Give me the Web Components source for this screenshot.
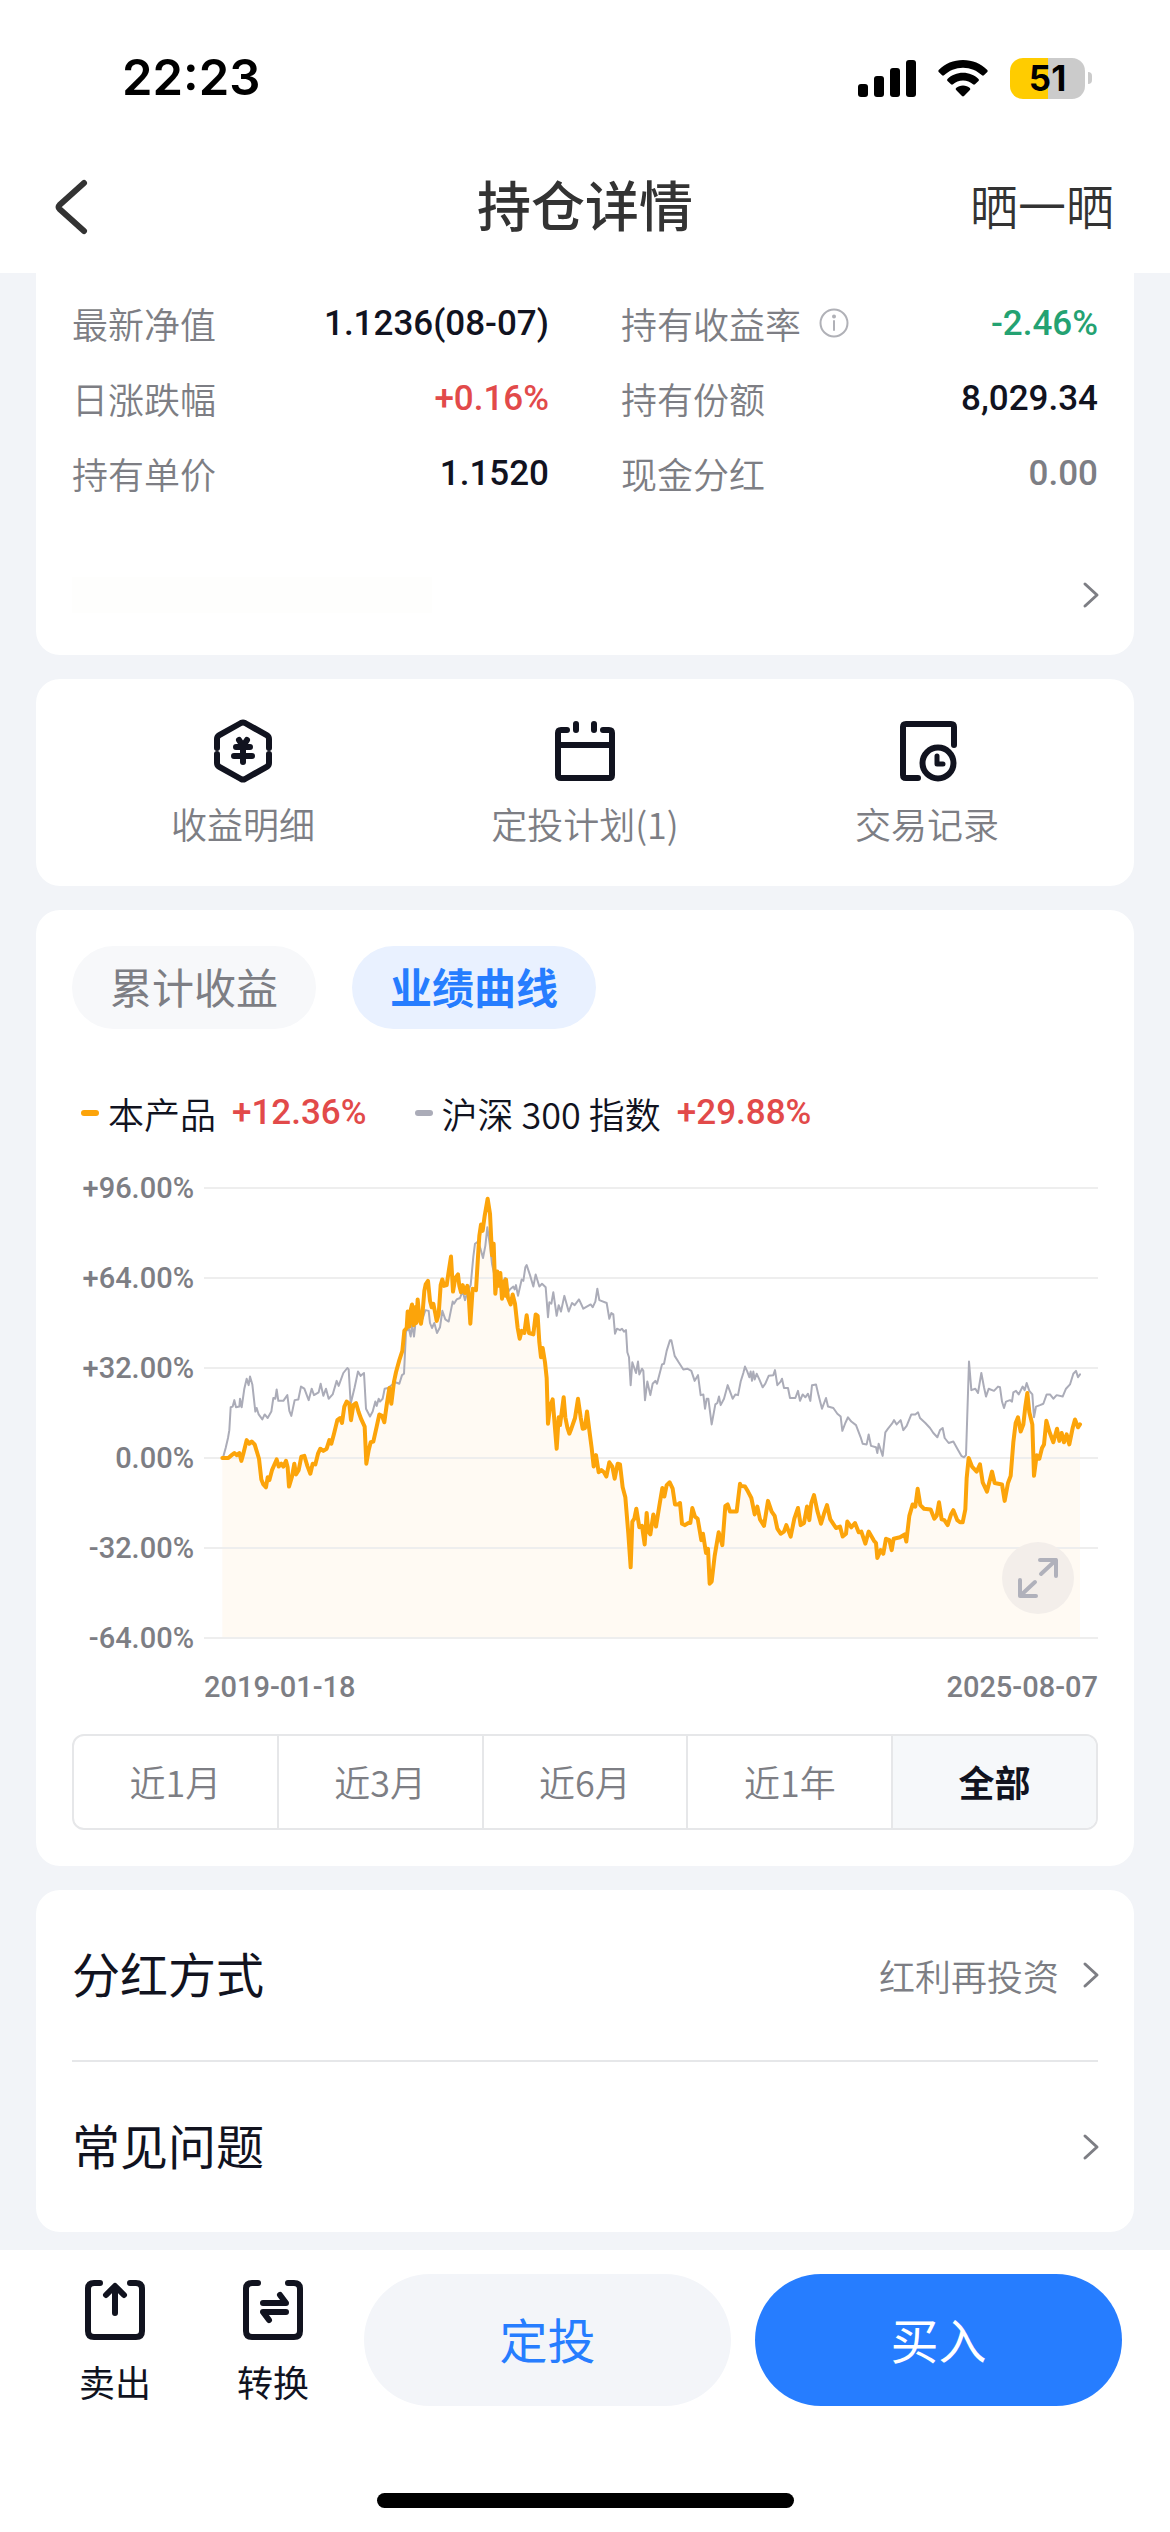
<!DOCTYPE html>
<html lang="zh-CN">
<head>
<meta charset="utf-8">
<meta name="viewport" content="width=device-width, initial-scale=1">
<title>持仓详情</title>
<style>
  :root {
    --ink: #11131f;
    --nav: #333333;
    --muted: #7d7e84;
    --line: #e6e7e9;
    --page: #f2f4f8;
    --blue: #267dff;
    --red: #e24a4a;
    --green: #24a272;
    --num: Roboto, "Liberation Sans", sans-serif;
  }
  body {
    margin: 0;
    background: var(--page);
    color: var(--ink);
    font-family: "Noto Sans CJK SC", "Noto Sans", sans-serif;
    font-size: 36px;
    line-height: 48px;
  }
</style>
</head>
<body>
<holding-page></holding-page>

<script>
const BASE = `
  *, *::before { box-sizing: border-box; }
  button { font: inherit; color: inherit; border: 0; margin: 0; padding: 0; background: none; cursor: pointer; }
  a { color: inherit; text-decoration: none; }
  svg { display: block; fill: none; overflow: visible; stroke-linecap: round; stroke-linejoin: round; flex: none; }
`;

function define(name, render) {
  customElements.define(name, class extends HTMLElement {
    connectedCallback() {
      if (this.shadowRoot) return;
      const { css, html } = render(this);
      this.attachShadow({ mode: 'open' }).innerHTML = `<style>${BASE}${css}</style>${html}`;
    }
  });
}

const ICONS = {
  yen: [60, 64, 6, '<path d="M4 29V20Q4 17.500 6.300 16.200L28 4Q30 3 32 4L53.700 16.200Q56 17.500 56 20V29M4 35V44Q4 46.500 6.300 47.800L28 60Q30 61 32 60L53.700 47.800Q56 46.500 56 44V35"/><path d="M26 21L30 27L34 21M23 28H37M21 37H39M30 28V43"/>'],
  calendar: [60, 60, 6, '<path d="M12 9H6Q3 9 3 12V54Q3 57 6 57H54Q57 57 57 54V12Q57 9 54 9H48M3 24H57M21 3V9M39 3V9"/>'],
  record: [60, 60, 6, '<path d="M21 57H9Q6 57 6 54V6Q6 3 9 3H54Q57 3 57 6V24"/><circle cx="41" cy="42" r="15.500"/><path stroke-width="5" d="M40 35V43H46"/>'],
  sell: [60, 60, 6, '<path d="M15 3H9Q3 3 3 9V51Q3 57 9 57H51Q57 57 57 51V9Q57 3 51 3H45M30 7V33M21 15L30 6L39 15"/>'],
  convert: [60, 60, 6, '<path d="M15 3H9Q3 3 3 9V51Q3 57 9 57H51Q57 57 57 51V9Q57 3 51 3H45"/><path d="M20 23H43L37 15M43 32H20L26 40"/>'],
  back: [32, 54, 6, '<path d="M28 3L3.500 25Q1.500 27 3.500 29L28 51"/>'],
  next: [16, 26, 3, '<path d="M3 2L15 13L3 24"/>'],
  info: [30, 30, 2, '<circle cx="15" cy="15" r="13.500"/><path d="M15 13V22"/><circle cx="15" cy="8.500" r="1"/>'],
  expand: [44, 44, 4, '<path d="M24 4H40V20M40 4L25 18M4 24V40H20M4 40L19 26"/>'],
};

define('app-icon', el => {
  const [w, h, stroke, body] = ICONS[el.getAttribute('name')];
  return {
    css: `:host { display: inline-flex; flex: none; }`,
    html: `<svg width="${w}" height="${h}" viewBox="0 0 ${w} ${h}" stroke="currentColor" stroke-width="${stroke}" aria-hidden="true">${body}</svg>`,
  };
});

define('status-bar', () => ({
  css: `
    :host { display: flex; align-items: center; justify-content: space-between; padding: 48px 78px 33px 122px; background: #fff; color: #000; }
    .time { font: 600 49px/60px Inter, sans-serif; }
    .signs { display: flex; align-items: center; gap: 22px; }
    .battery { display: flex; align-items: center; gap: 3px; }
    .cell { width: 75px; height: 41px; border-radius: 13px; text-align: center; font: 700 35px/41px Inter, sans-serif;
            background: linear-gradient(to right, #ffcc00 51%, #cbcbcb 51%); }
    .nub { width: 4px; height: 12px; border-radius: 0 4px 4px 0; background: #cbcbcb; }
    svg { fill: #000; }
  `,
  html: `
    <span class="time">22:23</span>
    <span class="signs">
      <svg width="58" height="38" viewBox="0 0 58 38"><rect y="25" width="10" height="13" rx="3"/><rect x="16" y="17" width="10" height="21" rx="3"/><rect x="32" y="9" width="10" height="29" rx="3"/><rect x="48" y="1" width="10" height="37" rx="3"/></svg>
      <svg width="50" height="37" viewBox="0 0 50 37"><path d="M25 0C34.500 0 43 3.700 49.300 9.900Q50.200 10.900 49.300 11.900L45.900 15.300Q45 16.200 44 15.300C39 10.500 32.300 7.700 25 7.700S11 10.500 6 15.300Q5 16.200 4.100 15.300L.7 11.900Q-.2 10.900 .7 9.900C7 3.700 15.500 0 25 0Z"/><path d="M25 12.800C31 12.800 36.400 15.100 40.500 18.900Q41.500 19.900 40.500 20.900L37 24.300Q36 25.200 35 24.300C32.400 22 28.900 20.500 25 20.500S17.600 22 15 24.300Q14 25.200 13 24.300L9.500 20.900Q8.500 19.900 9.500 18.900C13.600 15.100 19 12.800 25 12.800Z"/><path d="M25 25.500C27.700 25.500 30.100 26.500 31.900 28.100Q32.800 29.100 31.900 30.100L26 36Q25 36.900 24 36L18.100 30.100Q17.200 29.100 18.100 28.100C19.900 26.500 22.300 25.500 25 25.500Z"/></svg>
      <span class="battery"><span class="cell">51</span><span class="nub"></span></span>
    </span>`,
}));

define('nav-bar', () => ({
  css: `
    :host { display: grid; grid-template-columns: 1fr auto 1fr; align-items: center; height: 132px; padding: 0 56px; background: #fff; color: var(--nav); }
    .back { justify-self: start; display: flex; }
    h1, .share { padding-bottom: 6px; }
    h1 { margin: 0; font-size: 54px; line-height: 72px; font-weight: 500; }
    .share { justify-self: end; font-size: 48px; line-height: 60px; font-weight: 350; }
  `,
  html: `
    <button class="back" aria-label="返回"><app-icon name="back"></app-icon></button>
    <h1><slot></slot></h1>
    <button class="share">晒一晒</button>`,
}));

define('app-card', () => ({
  css: `
    :host { display: block; background: #fff; border-radius: 24px; padding: 0 36px; }
    :host([joined]) { border-radius: 0 0 24px 24px; padding-top: 13px; }
  `,
  html: `<slot></slot>`,
}));

define('stat-item', el => ({
  css: `
    :host { display: flex; align-items: center; justify-content: space-between; height: 75px; }
    dl { display: contents; }
    dt { display: flex; align-items: center; gap: 18px; padding-bottom: 2px; color: var(--muted); font-weight: 350; }
    app-icon { color: #b0b1b7; }
    dd { margin: 0; font: 500 35px/48px var(--num); color: var(--value, var(--ink)); }
    :host([tone=up]) { --value: var(--red); }
    :host([tone=down]) { --value: var(--green); }
    :host([tone=muted]) { --value: var(--muted); }
  `,
  html: `<dl><dt>${el.getAttribute('label')}${el.hasAttribute('info') ? '<app-icon name="info"></app-icon>' : ''}</dt><dd><slot></slot></dd></dl>`,
}));

define('stat-grid', () => ({
  css: `:host { display: grid; grid-template-columns: 1fr 1fr; column-gap: 72px; }`,
  html: `<slot></slot>`,
}));

define('notice-link', () => ({
  css: `
    :host { display: block; margin-top: 24px; }
    a { display: flex; align-items: center; justify-content: space-between; height: 120px; color: var(--muted); }
    .blank { width: 360px; height: 36px; background: #fefefd; }
  `,
  html: `<a href="#notice" aria-label="查看更多"><span class="blank"></span><app-icon name="next"></app-icon></a>`,
}));

define('quick-action', el => ({
  css: `
    :host { display: flex; flex: 1; }
    button { flex: 1; display: flex; flex-direction: column; align-items: center; gap: 16px; }
    app-icon { height: 64px; align-items: center; }
    span { color: var(--muted); font-weight: 350; }
  `,
  html: `<button><app-icon name="${el.getAttribute('icon')}"></app-icon><span><slot></slot></span></button>`,
}));

define('action-row', () => ({
  css: `:host { display: flex; padding: 40px 0 39px; }`,
  html: `<slot></slot>`,
}));

define('pill-tabs', () => ({
  css: `
    :host { display: flex; gap: 36px; padding-top: 36px; }
    button { padding: 0 38px 3px; border-radius: 42px; background: #f7f8fa; color: var(--muted); font-size: 42px; line-height: 80px; }
    button[aria-selected=true] { background: #e9f1ff; color: var(--blue); font-weight: 700; }
  `,
  html: `<button role="tab" aria-selected="false">累计收益</button><button role="tab" aria-selected="true">业绩曲线</button>`,
}));

define('chart-legend', () => ({
  css: `
    :host { display: flex; gap: 48px; margin-top: 60px; padding-left: 9px; font-weight: 350; }
    .key { display: flex; align-items: center; }
    .dash { width: 18px; height: 6px; border-radius: 3px; margin-right: 9px; background: #fca40a; }
    .dash.index { background: #abacb8; }
    b { margin: 0 8px; font-weight: inherit; }
    em { margin-left: 16px; font: 500 35px/48px var(--num); color: var(--red); }
  `,
  html: `
    <span class="key"><i class="dash"></i><span>本产品</span><em>+12.36%</em></span>
    <span class="key"><i class="dash index"></i><span>沪深<b>300</b>指数</span><em>+29.88%</em></span>`,
}));

/* Each series is a list of runs: the x offset of the run, then its x,y readings. */
const FUND = [
  [0, '487,834 505,834 515,826 523,820 530,826 538,820 544,842 550,822 560,784 568,794 575,788 584,796 597,836 604,894 610,908 618,916 623,888 628,896 636,868 650,838 656,858 664,850 670,858 678,842 683,860 687,914 696,886 703,850 708,880 716,868 724,830 733,828 742,856 751,878 758,850 766,852 774,822 781,808 790,814 800,808 808,784 814,794 822,766 832,728 840,722 846,736 853,690 860,676 868,682 873,728 880,686 888,680 896,706 904,726 914,746 919,850 926,812 932,790 940,788 950,746 958,712 966,716 973,734 980,686 988,638 994,682 1002,620 1008,594 1018,560 1027,534 1033,478'],
  [960, '80,470 83,424 88,466 92,420 96,404 101,462 105,412 109,456 113,390 118,440 123,458 128,424 133,366 137,348 144,338 150,394 155,412 160,402 166,430 170,450 176,432 182,350 187,334 192,352 200,350 206,312 213,270 219,368 226,330 234,320 238,352 243,370 248,350 255,372 262,352 266,378 271,458 278,360 288,364 294,270 298,212 303,180 308,198 314,156 323,108 330,150 336,266 341,234 346,374 352,312 356,352 361,316 366,388 372,340 376,380 378,334 384,386 392,404 398,376 405,402 413,470 419,500 425,478 433,484 440,434 447,484 460,488 467,432 473,436 478,510 483,552 488,526 495,566 500,610 504,738 510,690 518,670 524,740 530,808 536,720 540,742 551,664 556,720 562,748 568,766 574,752 585,722 594,668 602,720 608,752 615,750 621,704 628,756 635,806 641,858 648,826 656,874 664,868 672,874 679,886 688,846 697,858 704,892 713,850 720,852 728,916 736,944 745,1046 752,1140 757,1012 763,1004 769,976 778,1028 786,1024 794,1076 800,988 805,1040 811,1048 820,992 828,1026 838,968 847,918 853,942 860,910 869,902 878,920 885,964 894,964 900,960 906,1018 915,1022 925,1016 931,1016 937,974 945,998 953,1004 964,1064 969,1046 978,1100 984,1088 989,1186 995,1180 1004,1108 1016,1042 1027,1078 1036,968 1043,964 1050,984 1070,984 1080,906'],
  [2040, '2,912 15,914 24,928 34,946 44,992 52,970 60,1006 72,1024 84,954 95,984 104,996 112,1032 122,1046 132,1040 139,1022 152,1054 163,1004 174,974 182,1022 192,1016 201,970 208,1008 214,960 222,938 232,982 243,1018 252,990 261,966 271,1006 288,1030 300,1026 308,1054 318,1046 322,1012 334,1028 345,1016 356,1042 364,1040 376,1074 386,1040 402,1066 408,1072 412,1114 422,1092 430,1102 438,1060 448,1064 455,1092 461,1060 480,1056 494,1048 499,1068 508,996 518,964 526,970 533,920 541,966 552,976 572,978 583,1004 590,996 597,958 605,1006 613,1008 623,1022 633,992 640,980 652,1008 660,1014 668,1014 676,978 680,890 686,834 696,858 710,872 720,852 728,902 741,928 756,872 764,904 786,908 794,954 804,904 812,884 820,790 827,736 834,720 842,760 850,740 856,690 862,652 868,706 877,740 882,884 890,826 898,836 906,806 912,796 919,730 928,760 940,790 951,752 958,786 965,764 972,790 980,768 988,796 998,750 1005,726 1014,748 1020,740'],
];
const INDEX = [
  [0, '490,830 497,806 504,778 508,756 512,692 518,690 523,672 528,692 538,690 540,668 545,692 553,640 560,612 566,630 570,606 577,628 586,704 590,694 596,712 607,726 614,712 623,722 634,704 640,666 646,668 650,642 655,674 670,674 682,658 688,702 694,716 704,672 715,670 723,634 733,640 746,672 755,640 762,658 776,650 782,626 790,660 798,640 806,668 818,656 830,618 836,632 850,596 862,582 866,586 872,682 884,636 894,592 902,604 912,596 918,696 930,718 938,704 946,676 950,688 956,668'],
  [960, '0,676 8,668 14,640 24,638 46,622 58,626 66,602 72,598 78,480 86,470 92,494 96,460 102,494 106,460 115,450 128,444 136,420 146,422 150,456 156,470 163,456 171,484 180,468 187,422 196,446 206,452 218,396 222,402 230,390 240,386 248,366 255,392 262,370 272,350 280,270 285,234 294,228 302,250 309,274 316,240 322,188 330,240 336,290 345,330 356,340 364,350 375,330 383,370 392,360 400,354 404,362 408,350 414,380 425,334 430,338 436,300 440,294 450,322 460,354 467,320 478,354 486,346 497,356 504,440 508,398 514,402 520,370 530,436 536,406 543,424 553,380 566,424 576,400 584,406 597,390 610,416 632,404 638,412 646,396 652,360 658,392 680,400 688,444 694,428 700,432 705,486 711,472 720,476 726,472 732,480 738,476 742,538 747,552 752,630 757,566 768,596 774,564 778,600 786,584 790,590 795,672 802,620 811,658 818,626 826,618 831,626 846,572 852,570 860,534 870,504 874,504 884,548 896,566 910,586 922,584 934,590 944,618 954,602 962,658 970,656 975,696 980,668 985,668 995,740 1006,684 1012,680 1017,662 1022,686 1032,668 1043,630 1058,668 1066,656 1074,658 1082,620 1090,596'],
  [2040, '15,578 22,592 28,608 32,592 36,618 40,592 44,614 50,598 58,614 68,636 76,626 86,604 100,602 105,588 112,630 122,620 126,612 132,638 144,638 150,666 166,666 174,646 180,674 188,656 196,664 204,654 211,674 216,630 228,628 236,660 246,696 258,666 264,690 280,694 292,710 302,718 307,758 316,736 324,720 334,732 348,742 362,776 368,794 380,796 386,768 393,800 408,804 412,820 416,794 428,828 436,762 444,752 456,738 462,728 470,740 482,728 490,756 500,744 514,712 526,712 534,706 540,722 556,736 570,750 580,764 592,776 600,756 608,750 614,778 626,792 640,788 652,808 664,828 672,832 678,826 687,564 694,644 706,640 714,652 724,596 732,636 738,662 746,640 762,646 774,634 780,636 786,676 792,694 798,676 810,672 816,676 820,650 828,646 836,656 848,634 854,644 860,624 868,646 877,656 882,720 888,690 900,686 910,682 920,656 930,656 940,668 950,658 968,662 978,640 990,628 1000,598 1008,590 1014,608 1020,600'],
];
const points = series => series.flatMap(([dx, run]) =>
  run.split(' ').map(p => { const [x, y] = p.split(','); return `${+x + dx},${y}`; })).join(' ');

define('performance-chart', () => {
  const fund = points(FUND);
  const grid = [78, 330, 582, 834, 1086, 1338].map(y => `M432 ${y}H3114`).join('');
  return {
    css: `
      :host { display: grid; grid-template-columns: 122px 1fr; column-gap: 10px; margin-top: 36px; color: var(--muted); font: 500 29px/30px var(--num); }
      .axis { display: flex; flex-direction: column; justify-content: space-between; text-align: right; height: 480px; }
      .plot { position: relative; padding: 15px 0; }
      .plot > svg { width: 100%; height: 450px; }
      .plot path, .plot polyline { vector-effect: non-scaling-stroke; }
      .expand { position: absolute; right: 24px; bottom: 39px; width: 72px; height: 72px; border-radius: 50%;
                display: flex; align-items: center; justify-content: center; background: #f3eeea; color: #b0b1bb; }
      .dates { grid-column: 2; display: flex; justify-content: space-between; margin-top: 14px; line-height: 40px; }
    `,
    html: `
      <div class="axis"><span>+96.00%</span><span>+64.00%</span><span>+32.00%</span><span>0.00%</span><span>-32.00%</span><span>-64.00%</span></div>
      <div class="plot">
        <svg viewBox="432 78 2682 1260" preserveAspectRatio="none" role="img" aria-label="业绩曲线">
          <polygon points="487,1338 ${fund} 3060,1338" fill="#fffaf3"/>
          <path d="${grid}" stroke="#eeeeee" stroke-width="2" stroke-linecap="butt"/>
          <polyline points="${points(INDEX)}" stroke="#abacb8" stroke-width="2"/>
          <polyline points="${fund}" stroke="#fca40a" stroke-width="4"/>
        </svg>
        <button class="expand" aria-label="全屏查看"><app-icon name="expand"></app-icon></button>
      </div>
      <div class="dates"><time>2019-01-18</time><time>2025-08-07</time></div>`,
  };
});

define('range-picker', () => ({
  css: `
    :host { display: block; padding: 27px 0 36px; }
    .bar { display: flex; height: 96px; border: 2px solid var(--line); border-radius: 12px; overflow: hidden; }
    button { flex: 1; padding-bottom: 2px; color: var(--muted); font-weight: 350; }
    button + button { border-left: 2px solid var(--line); }
    button[aria-pressed=true] { background: #f6f8fa; color: var(--ink); font-weight: 700; }
  `,
  html: `<div class="bar">
    <button>近1月</button><button>近3月</button><button>近6月</button><button>近1年</button><button aria-pressed="true">全部</button>
  </div>`,
}));

define('setting-row', el => ({
  css: `
    :host { display: block; }
    :host([divided]) { border-top: 2px solid var(--line); }
    a { display: flex; align-items: center; justify-content: space-between; height: 170px; }
    .name { padding-bottom: 6px; font-size: 48px; line-height: 60px; }
    .end { display: flex; align-items: center; gap: 23px; color: var(--muted); font-weight: 350; }
  `,
  html: `<a href="#${el.id}"><span class="name"><slot></slot></span><span class="end">${el.getAttribute('value') || ''}<app-icon name="next"></app-icon></span></a>`,
}));

define('trade-bar', () => ({
  css: `
    :host { display: block; background: #fff; margin-top: auto; padding: 24px 0; }
    .row { display: flex; align-items: flex-start; padding: 0 48px 0 36px; }
    .tool { width: 158px; display: flex; flex-direction: column; align-items: center; gap: 17px; padding-top: 6px; }
    .main { flex: 1; height: 132px; padding-bottom: 4px; border-radius: 66px; font-size: 48px; background: #f3f5f9; color: var(--blue); }
    .tool + .main { margin-left: 12px; }
    .main + .main { margin-left: 24px; background: var(--blue); color: #fff; }
    .home { width: 417px; height: 15px; border-radius: 8px; margin: 87px auto 0; background: #000; }
  `,
  html: `
    <div class="row">
      <button class="tool"><app-icon name="sell"></app-icon><span>卖出</span></button>
      <button class="tool"><app-icon name="convert"></app-icon><span>转换</span></button>
      <button class="main">定投</button>
      <button class="main">买入</button>
    </div>
    <div class="home"></div>`,
}));

define('holding-page', () => ({
  css: `
    :host { display: flex; flex-direction: column; min-height: 100vh; }
    main { display: flex; flex-direction: column; gap: 24px; padding: 0 36px 18px; }
  `,
  html: `
    <status-bar></status-bar>
    <nav-bar>持仓详情</nav-bar>
    <main>
      <app-card joined>
        <stat-grid>
          <stat-item label="最新净值">1.1236(08-07)</stat-item>
          <stat-item label="持有收益率" info tone="down">-2.46%</stat-item>
          <stat-item label="日涨跌幅" tone="up">+0.16%</stat-item>
          <stat-item label="持有份额">8,029.34</stat-item>
          <stat-item label="持有单价">1.1520</stat-item>
          <stat-item label="现金分红" tone="muted">0.00</stat-item>
        </stat-grid>
        <notice-link></notice-link>
      </app-card>
      <app-card>
        <action-row>
          <quick-action icon="yen">收益明细</quick-action>
          <quick-action icon="calendar">定投计划(1)</quick-action>
          <quick-action icon="record">交易记录</quick-action>
        </action-row>
      </app-card>
      <app-card>
        <pill-tabs></pill-tabs>
        <chart-legend></chart-legend>
        <performance-chart></performance-chart>
        <range-picker></range-picker>
      </app-card>
      <app-card>
        <setting-row id="dividend" value="红利再投资">分红方式</setting-row>
        <setting-row id="faq" divided>常见问题</setting-row>
      </app-card>
    </main>
    <trade-bar></trade-bar>`,
}));
</script>
</body>
</html>
